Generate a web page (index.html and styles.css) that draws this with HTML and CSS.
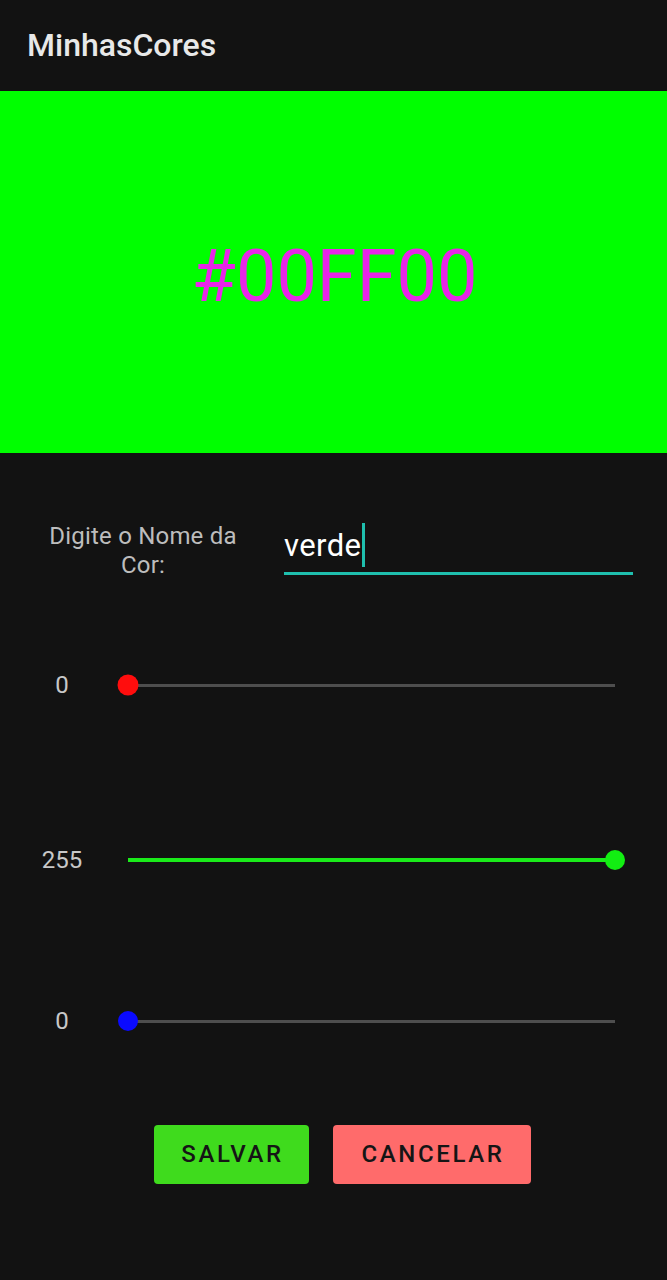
FILE: index.html
```html
<!DOCTYPE html>
<html lang="pt">
<head>
<meta charset="utf-8">
<title>MinhasCores</title>
<link rel="stylesheet" href="styles.css">
</head>
<body>
<div class="app">
  <header class="appbar">MinhasCores</header>
  <section class="preview">
    <span class="hex">#00FF00</span>
  </section>
  <section class="name-row">
    <label class="name-label">Digite o Nome da Cor:</label>
    <div class="name-input">verde<span class="caret"></span></div>
  </section>
  <section class="sliders">
    <div class="slider-row row-r">
      <span class="slider-value">0</span>
      <div class="track">
        <div class="fill fill-r" style="width:0%"></div>
        <div class="thumb thumb-r" style="left:0%"></div>
      </div>
    </div>
    <div class="slider-row row-g">
      <span class="slider-value">255</span>
      <div class="track">
        <div class="fill fill-g" style="width:100%"></div>
        <div class="thumb thumb-g" style="left:100%"></div>
      </div>
    </div>
    <div class="slider-row row-b">
      <span class="slider-value">0</span>
      <div class="track">
        <div class="fill fill-b" style="width:0%"></div>
        <div class="thumb thumb-b" style="left:0%"></div>
      </div>
    </div>
  </section>
  <section class="actions">
    <button class="btn btn-save">SALVAR</button>
    <button class="btn btn-cancel">CANCELAR</button>
  </section>
</div>
</body>
</html>
```
FILE: styles.css
```css
* { box-sizing: border-box; }
html, body {
  margin: 0;
  padding: 0;
  background: #121212;
}
body {
  font-family: Roboto, "Noto Sans", "Liberation Sans", sans-serif;
  color: #e6e6e6;
}
.app {
  width: 667px;
  height: 1280px;
  display: flex;
  flex-direction: column;
  background: #121212;
}
.appbar {
  height: 91px;
  display: flex;
  align-items: center;
  padding-left: 27px;
  padding-bottom: 2px;
  font-size: 32px;
  font-weight: 500;
  color: #e8e8e8;
}
.preview {
  height: 362px;
  background: #00ff00;
  display: flex;
  align-items: center;
  justify-content: center;
}
.hex {
  font-size: 72px;
  color: #e826e8;
  padding-top: 8px;
  padding-left: 2px;
}
.name-row {
  margin-top: 67px;
  height: 60px;
  display: flex;
  align-items: center;
  padding-left: 34px;
}
.name-label {
  width: 218px;
  text-align: center;
  font-size: 24px;
  line-height: 29px;
  color: #bdbdbd;
  letter-spacing: 0.2px;
  padding-top: 2px;
}
.name-input {
  margin-left: 32px;
  width: 349px;
  height: 50px;
  border-bottom: 3px solid #1fbfae;
  font-size: 31px;
  color: #ffffff;
  display: flex;
  align-items: flex-end;
  padding-bottom: 9px;
  line-height: 34px;
  letter-spacing: 0.4px;
}
.caret {
  display: inline-block;
  width: 3px;
  height: 44px;
  background: #1fbfae;
  margin-left: 1px;
  align-self: flex-end;
  margin-bottom: -4px;
}
.sliders {
  display: flex;
  flex-direction: column;
}
.slider-row {
  height: 40px;
  display: flex;
  align-items: center;
}
.row-r { margin-top: 85px; }
.row-g { margin-top: 135px; }
.row-b { margin-top: 121px; }
.slider-value {
  width: 124px;
  text-align: center;
  font-size: 24px;
  color: #c8c8c8;
}
.track {
  position: relative;
  margin-left: 4px;
  width: 487px;
  height: 3px;
  background: #4e4e4e;
}
.fill {
  height: 100%;
}
.fill-g { background: #1aeb1a; height: 4px; margin-top: -0.5px; }
.thumb {
  position: absolute;
  top: 50%;
  width: 20px;
  height: 20px;
  border-radius: 50%;
  transform: translate(-50%, -50%);
}
.thumb-r { background: #ff0d0d; width: 21px; height: 21px; }
.thumb-g { background: #12ee12; }
.thumb-b { background: #0a0aff; }
.actions {
  margin-top: 84px;
  display: flex;
  justify-content: center;
  gap: 24px;
  padding-left: 18px;
}
.btn {
  height: 59px;
  border: none;
  border-radius: 4px;
  font-family: Roboto, "Noto Sans", "Liberation Sans", sans-serif;
  font-size: 24px;
  font-weight: 500;
  letter-spacing: 2.6px;
  color: #151515;
  padding: 0 0 2px 2px;
  text-align: center;
}
.btn-save { background: #3fdb1d; width: 155px; }
.btn-cancel { background: #ff6b6b; width: 198px; }
```
